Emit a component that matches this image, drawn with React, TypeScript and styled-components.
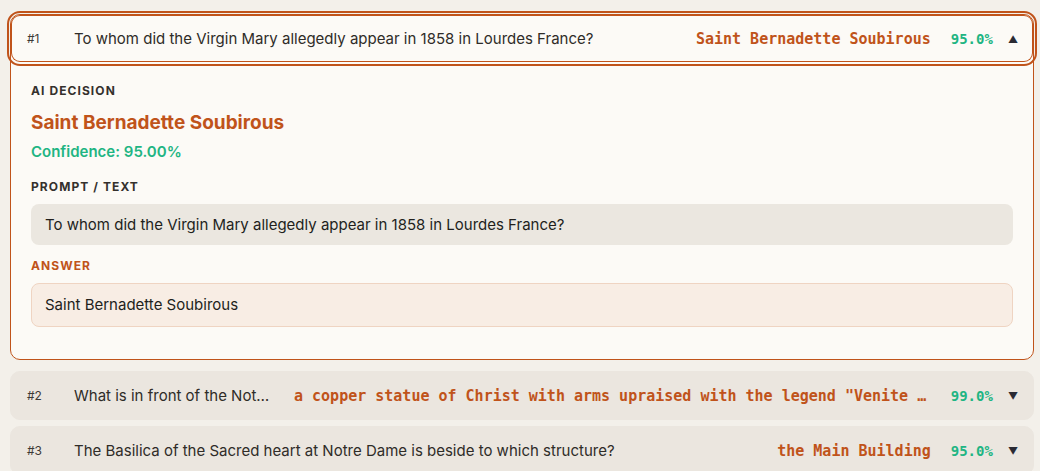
import React from 'react';
import styled, { createGlobalStyle, css } from 'styled-components';

const GlobalStyle = createGlobalStyle`
  * { box-sizing: border-box; }
  body {
    margin: 0;
    background: #f3f0ea;
    font-family: Inter, "Noto Sans", sans-serif;
    color: #2a2723;
  }
`;

type Item = {
  id: number;
  question: string;
  answer: string;
  confidence: number;
};

const items: Item[] = [
  {
    id: 1,
    question: 'To whom did the Virgin Mary allegedly appear in 1858 in Lourdes France?',
    answer: 'Saint Bernadette Soubirous',
    confidence: 0.95,
  },
  {
    id: 2,
    question: 'What is in front of the Notre Dame Main Building?',
    answer: 'a copper statue of Christ with arms upraised with the legend "Venite Ad Me Omnes"',
    confidence: 0.99,
  },
  {
    id: 3,
    question: 'The Basilica of the Sacred heart at Notre Dame is beside to which structure?',
    answer: 'the Main Building',
    confidence: 0.95,
  },
];

const App: React.FC = () => {
  return (
    <Page>
      <GlobalStyle />
      {items.map((item, i) => {
        const open = i === 0;
        return (
          <Card key={item.id} $open={open}>
            <Header $open={open}>
              <Num>#{item.id}</Num>
              <Question>{item.question}</Question>
              <AnswerMono>{item.answer}</AnswerMono>
              <Pct>{(item.confidence * 100).toFixed(1)}%</Pct>
              <Caret>{open ? '▲' : '▼'}</Caret>
            </Header>
            {open && (
              <Body>
                <Label>AI Decision</Label>
                <Decision>{item.answer}</Decision>
                <Confidence>Confidence: {(item.confidence * 100).toFixed(2)}%</Confidence>
                <Label $top={17}>Prompt / Text</Label>
                <PromptBox>{item.question}</PromptBox>
                <Label $accent $top={13}>Answer</Label>
                <AnswerBox>{item.answer}</AnswerBox>
              </Body>
            )}
          </Card>
        );
      })}
    </Page>
  );
};

export default App;

const Page = styled.div`
  display: flex;
  flex-direction: column;
  gap: 6px;
  padding: 14px 6px 0 10px;
  height: 471px;
  overflow: hidden;
`;

const Card = styled.div<{ $open: boolean }>`
  flex-shrink: 0;
  border-radius: 10px;
  ${(p) =>
    p.$open
      ? css`
          background: #fcfaf6;
          border: 1px solid #c0531a;
          margin-bottom: 5px;
        `
      : css`
          background: #ebe6df;
          border: 1px solid #ebe6df;
        `}
`;

const Header = styled.div<{ $open: boolean }>`
  display: flex;
  align-items: center;
  gap: 20px;
  height: 47px;
  padding: 0 15px 0 16px;
  border-radius: 9px;
  ${(p) =>
    p.$open &&
    css`
      box-shadow: inset 0 0 0 1px #c0531a;
      outline: 2px solid #c0531a;
      outline-offset: 2px;
    `}
`;

const Num = styled.span`
  flex: 0 0 27px;
  font-size: 12px;
  color: #3d3a36;
`;

const Question = styled.span`
  flex: 1 0 0;
  min-width: 200px;
  font-size: 15px;
  color: #2f2c28;
  white-space: nowrap;
  overflow: hidden;
  text-overflow: ellipsis;
`;

const AnswerMono = styled.span`
  flex: 0 1 auto;
  min-width: 0;
  font-family: "DejaVu Sans Mono", "Liberation Mono", monospace;
  font-size: 15px;
  font-weight: 700;
  color: #c0531a;
  white-space: nowrap;
  overflow: hidden;
  text-overflow: ellipsis;
`;

const Pct = styled.span`
  flex: 0 0 auto;
  font-family: "DejaVu Sans Mono", "Liberation Mono", monospace;
  font-size: 14px;
  font-weight: 700;
  color: #1fb583;
`;

const Caret = styled.span`
  flex: 0 0 auto;
  font-size: 10px;
  color: #2a2a33;
  margin-left: -5px;
`;

const Body = styled.div`
  display: flex;
  flex-direction: column;
  padding: 21px 20px 32px;
`;

const Label = styled.div<{ $accent?: boolean; $top?: number }>`
  font-size: 12px;
  line-height: 16px;
  font-weight: 700;
  letter-spacing: 0.09em;
  text-transform: uppercase;
  color: ${(p) => (p.$accent ? '#c0531a' : '#34302c')};
  margin-top: ${(p) => p.$top ?? 0}px;
  margin-bottom: 9px;
`;

const Decision = styled.div`
  font-size: 19px;
  line-height: 24px;
  font-weight: 700;
  color: #c0531a;
  margin-top: 3px;
  margin-bottom: 7px;
`;

const Confidence = styled.div`
  font-size: 15px;
  line-height: 20px;
  font-weight: 600;
  color: #1fb583;
`;

const PromptBox = styled.div`
  background: #ebe7e0;
  border-radius: 8px;
  padding: 10px 14px;
  font-size: 15px;
  line-height: 21px;
  min-height: 41px;
  color: #221f1c;
`;

const AnswerBox = styled.div`
  background: #f8ede4;
  border: 1px solid #efd4c2;
  border-radius: 8px;
  padding: 10px 13px;
  font-size: 15px;
  line-height: 22px;
  color: #221f1c;
`;
